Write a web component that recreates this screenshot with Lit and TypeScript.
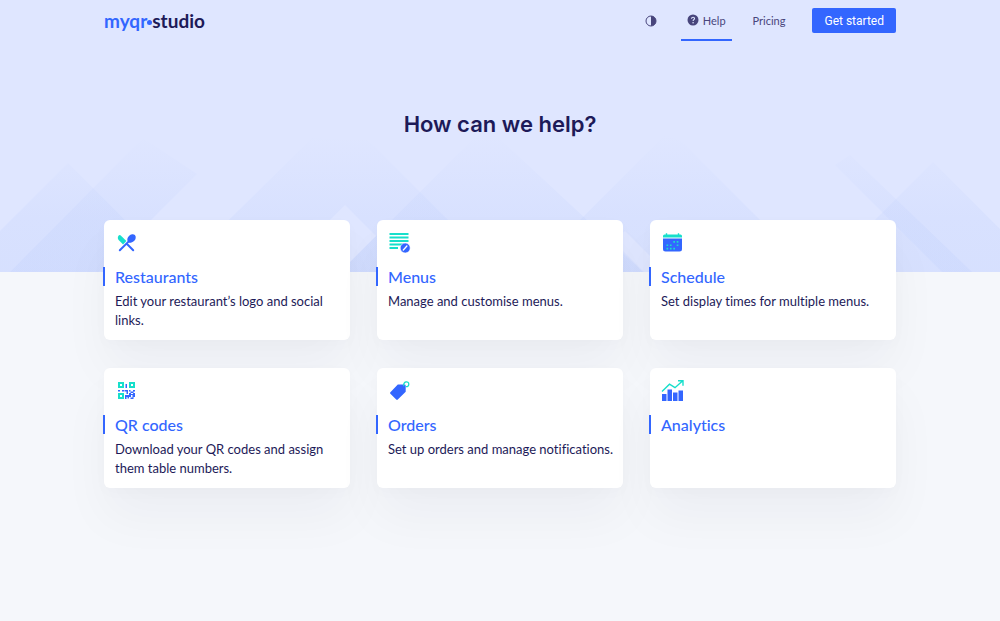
import { LitElement, html, css, svg, SVGTemplateResult } from "lit";
import { customElement, property } from "lit/decorators.js";

interface Topic {
  title: string;
  text: string;
  icon: SVGTemplateResult;
}

const TEAL = "#17dfcb";
const BLUE = "#3366ff";

const cutlery = svg`
  <path d="M3.500 3.700c.8-.9 1.700-.8 2.500 0l5.400 5.400-3.300 3.300-4.200-4.200C2.600 6.800 2.500 5 3.500 3.700z" fill=${TEAL}/>
  <path d="M4.800 18.300 13.500 9.600M11.500 11.500l6.700 6.800" stroke=${BLUE} stroke-width="2" stroke-linecap="round"/>
  <ellipse cx="16.500" cy="6.500" rx="4.800" ry="3.600" transform="rotate(-45 16.500 6.500)" fill=${BLUE}/>`;

const menuList = svg`
  <path d="M1.500 2h19M1.500 5.500h19M1.500 9h19M1.500 12.500h14M1.500 16h8.500" stroke=${TEAL} stroke-width="2"/>
  <circle cx="17.200" cy="16" r="5" fill=${BLUE} stroke="#fff" stroke-width=".6"/>
  <path d="m15.300 18 3.600-4" stroke="#fff" stroke-width="1.300" stroke-linecap="round"/>`;

const calendar = svg`
  <path d="M2 6.500h19v10.500a2.500 2.500 0 0 1-2.500 2.500h-14A2.500 2.500 0 0 1 2 17z" fill=${BLUE}/>
  <path d="M2 5.500V4A1.500 1.500 0 0 1 3.500 2.500h1.300V1.200h1.400V2.500h10.600V1.200h1.400V2.500h1.300A1.500 1.500 0 0 1 21 4V5.500z" fill=${TEAL}/>
  <path d="M12.300 9h1.700v1.700h-1.700zM15.700 9h1.700v1.700h-1.700zM15.700 12.400h1.700v1.700h-1.700zM5.500 12.400h1.700v1.700H5.500zM8.900 12.400h1.700v1.700H8.900zM5.500 15.800h1.700v1.700H5.500zM8.900 15.800h1.700v1.700H8.900zM12.300 15.800h1.700v1.700h-1.700z" fill=${TEAL}/>`;

const qr = svg`
  <path d="M4 3h4v4H4zM15 3h4v4h-4zM4 14h4v4H4z" fill="none" stroke=${TEAL} stroke-width="2"/>
  <path d="M10.500 4h1.500v4h-1.500zM3 10h2v1.500H3zM7 10h2v1.500H7zM9.500 10H13v4h-1.500v-2.500h-2zM14 10h1.500v1.500H14zM18 10h2v1.500h-2zM15.500 11.500h3v1.500h-3zM14 13h2v2h-2zM18 13h2v4h-1.500v2h-3v-1.500h2V15h-1.500v2H14v1.500h-1.500V17h-1v2H10v-4h4v-1h4z" fill=${BLUE}/>`;

const tag = svg`
  <path d="M9.800 4.500h6.700q1.200 0 1.200 1.200v6l-7.900 7.900q-.8.700-1.600 0l-5.800-5.800q-.8-.8 0-1.600z" fill=${BLUE}/>
  <path d="M15.800 6.200c-1.300-4.800 5.200-5.800 5-1.900-.1 1.700-1.300 2.600-2.900 2.300" fill="none" stroke=${TEAL} stroke-width="1.300"/>`;

const chart = svg`
  <path d="M1 14h4.500v7H1zM6.500 9.500H11V21H6.500zM12 12.500h4.500V21H12zM17.500 10.500H22V21h-4.500z" fill=${BLUE}/>
  <path d="m1 11.500 7.500-7.300 5.500 3.500L21.500 1M17 .800h5v5" fill="none" stroke=${TEAL} stroke-width="1.400"/>`;

const TOPICS: Topic[] = [
  { title: "Restaurants", text: "Edit your restaurant’s logo and social links.", icon: cutlery },
  { title: "Menus", text: "Manage and customise menus.", icon: menuList },
  { title: "Schedule", text: "Set display times for multiple menus.", icon: calendar },
  { title: "QR codes", text: "Download your QR codes and assign them table numbers.", icon: qr },
  { title: "Orders", text: "Set up orders and manage notifications.", icon: tag },
  { title: "Analytics", text: "", icon: chart },
];

@customElement("topic-card")
class TopicCard extends LitElement {
  @property({ attribute: false }) topic!: Topic;

  static styles = css`
    :host {
      display: block;
      box-sizing: border-box;
      background: #fff;
      border-radius: 6px;
      padding: 12px 4px 10px 0;
      box-shadow: 0 30px 50px rgba(30, 30, 40, 0.04), 0 4px 16px rgba(30, 30, 40, 0.02);
    }
    .icon {
      display: block;
      width: 24px;
      height: 24px;
      margin-left: 11px;
    }
    .title {
      margin: 11px 0 0 -1px;
      border-left: 2px solid #3366ff;
      padding-left: 10px;
      font-size: 16px;
      line-height: 19px;
      font-weight: 500;
    }
    a {
      color: #3366ff;
      text-decoration: none;
    }
    .text {
      margin: 6px 0 0 11px;
      font-size: 13px;
      line-height: 19px;
      color: #1d1a58;
    }
  `;

  render() {
    const { title, text, icon } = this.topic;
    return html`
      <svg class="icon" viewBox="0 0 24 24" fill="none" aria-hidden="true">${icon}</svg>
      <h2 class="title"><a href="#">${title}</a></h2>
      ${text ? html`<p class="text">${text}</p>` : null}
    `;
  }
}

@customElement("app-root")
class AppRoot extends LitElement {
  static styles = css`
    :host {
      display: grid;
      min-height: 100vh;
      background: #f5f7fb;
      color: #1d1a58;
      font-family: Lato, "Open Sans", sans-serif;
      font-variant-ligatures: none;
    }
    .backdrop {
      grid-area: 1 / 1;
      display: block;
      width: 100%;
      height: 272px;
      background: #dfe6ff;
    }
    .page {
      grid-area: 1 / 1;
      box-sizing: border-box;
      width: 100%;
      max-width: 824px;
      margin: 0 auto;
      padding: 0 16px 64px;
      z-index: 1;
    }
    .bar {
      display: flex;
      align-items: center;
      justify-content: space-between;
      height: 41px;
    }
    .logo {
      display: flex;
      align-items: center;
      color: #1d1a58;
      font-size: 19px;
      line-height: 24px;
      font-weight: 700;
      text-decoration: none;
    }
    .brand {
      color: #3366ff;
    }
    .dot {
      width: 5px;
      height: 5px;
      margin-top: 3px;
      border-radius: 50%;
      background: #3366ff;
    }
    .nav {
      display: flex;
      align-items: center;
      align-self: stretch;
      font-size: 11px;
    }
    .link {
      display: flex;
      align-items: center;
      gap: 4px;
      box-sizing: border-box;
      height: 41px;
      padding: 1px 6px 0;
      border-bottom: 2px solid transparent;
      color: #48457c;
      text-decoration: none;
    }
    .help {
      margin: 0 15px 0 18px;
      border-color: #3366ff;
    }
    .theme {
      display: flex;
      padding: 0 6px;
      border: 0;
      background: none;
      color: #48457c;
    }
    .glyph {
      display: block;
      width: 12px;
      height: 12px;
    }
    .cta {
      height: 25px;
      margin-left: 21px;
      padding: 0 12px;
      border: 0;
      border-radius: 2px;
      background: #3366ff;
      color: #fff;
      font: 12px/24px Roboto, sans-serif;
    }
    .heading {
      margin: 67px 0 79px;
      font: 600 22px/33px Inter, sans-serif;
      text-align: center;
    }
    .grid {
      display: grid;
      grid-template-columns: repeat(auto-fit, minmax(220px, 1fr));
      grid-auto-rows: 1fr;
      gap: 28px 27px;
    }
  `;

  render() {
    return html`
      <svg class="backdrop" viewBox="0 0 1000 272" preserveAspectRatio="xMidYMax slice" aria-hidden="true">
        <defs>
          <linearGradient id="fade" gradientUnits="userSpaceOnUse" x1="0" y1="135" x2="0" y2="272">
            <stop offset="0" stop-color="#bccdfc" stop-opacity="0" />
            <stop offset=".6" stop-color="#bccdfc" stop-opacity=".2" />
            <stop offset="1" stop-color="#bccdfc" stop-opacity=".24" />
          </linearGradient>
        </defs>
        <g fill="url(#fade)">
          <path d="M-41 272 68 163l109 109z" />
          <path d="m10 272 133-134 54 36-98 98z" />
          <path d="m176 272 136-134 56 2 132 132H340l36-36-31-31-67 67z" />
          <path d="m340 272 146-146 157 146z" />
          <path d="m528 272 137-137 15 5 132 132H666l-41-41-41 41z" />
          <path d="m603 231 41 41h-82z" />
          <path d="m835 165 15-10 122 117h-30z" />
          <path d="m823 272 110-110 110 110z" />
        </g>
      </svg>
      <div class="page">
        <header class="bar">
          <a class="logo" href="#" aria-label="myqr studio">
            <span class="brand">myqr</span><span class="dot"></span><span>studio</span>
          </a>
          <nav class="nav">
            <button class="theme" type="button" aria-label="Toggle theme">
              <svg class="glyph" viewBox="0 0 12 12">
                <circle cx="6" cy="6" r="5" fill="none" stroke="currentColor" />
                <path d="M6 1a5 5 0 0 1 0 10z" fill="currentColor" />
              </svg>
            </button>
            <a class="link help" href="#" aria-current="page">
              <svg class="glyph" viewBox="0 0 12 12">
                <circle cx="6" cy="6" r="5.500" fill="currentColor" />
                <path d="M4.500 4.700C4.600 2.700 7.700 2.800 7.500 4.600 7.400 5.600 6.100 5.700 6.100 6.900" fill="none" stroke="#dfe6ff" stroke-width="1.100" />
                <circle cx="6.100" cy="8.700" r=".8" fill="#dfe6ff" />
              </svg>
              Help
            </a>
            <a class="link" href="#">Pricing</a>
            <button class="cta" type="button">Get started</button>
          </nav>
        </header>
        <main>
          <h1 class="heading">How can we help?</h1>
          <div class="grid">
            ${TOPICS.map((topic) => html`<topic-card .topic=${topic}></topic-card>`)}
          </div>
        </main>
      </div>
    `;
  }
}
